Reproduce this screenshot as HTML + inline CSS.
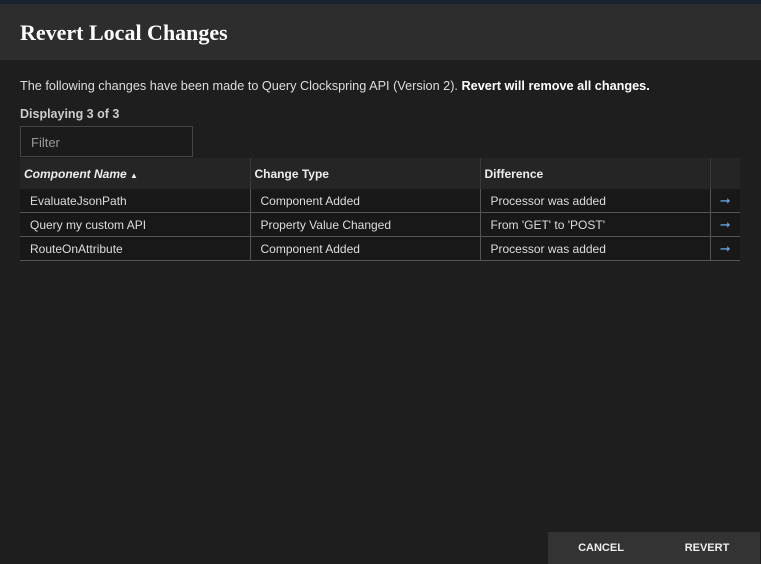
<!DOCTYPE html>
<html><head><style>
body{margin:0;width:761px;height:564px;background:#1e1e1e;font-family:"Liberation Sans",sans-serif;color:#eee;position:relative;overflow:hidden}
.top{position:absolute;left:0;top:0;width:761px;height:4px;background:#1a2330}
.hd{position:absolute;left:0;top:4px;width:761px;height:56px;background:#2d2d2d}
.hd h1{margin:0;position:absolute;left:20px;top:16px;font-family:"Liberation Serif",serif;font-size:22px;font-weight:bold;color:#fff}
.p{position:absolute;left:20px;top:79px;font-size:12.7px;color:#ddd}
.d{position:absolute;left:20px;top:107px;font-size:12.5px;color:#ccc;font-weight:bold}
.f{position:absolute;left:20px;top:126px;width:173px;height:31px;border:1px solid #444;background:#1b1b1b;box-sizing:border-box;font-size:13px;color:#999;padding:8px 10px}
table{position:absolute;left:20px;top:158px;border-collapse:collapse;font-size:12px;table-layout:fixed;width:720px}
th{background:#252525;height:31px;text-align:left;padding:0 4px;font-weight:bold;border-left:1px solid #3a3a3a;color:#eee}
th:first-child{border-left:none}
td{background:#181818;height:23px;padding:0 0 0 10px;border-left:1px solid #555;border-bottom:1px solid #555;color:#ddd}
td:first-child{border-left:none}
td.a{color:#5fa0d8;text-align:center;padding:0;font-size:13px}
.b{position:absolute;top:532px;height:32px;width:106px;background:#333;font-size:11px;font-weight:bold;text-align:center;line-height:32px;color:#eee}
</style></head><body>
<div class="top"></div>
<div class="hd"><h1>Revert Local Changes</h1></div>
<div class="p">The following changes have been made to Query Clockspring API (Version 2). <b style="color:#fff">Revert will remove all changes.</b></div>
<div class="d">Displaying 3 of 3</div>
<div class="f">Filter</div>
<table>
<colgroup><col style="width:230px"><col style="width:230px"><col style="width:230px"><col style="width:30px"></colgroup>
<tr><th><i>Component Name</i> <span style="font-size:8px">▲</span></th><th>Change Type</th><th>Difference</th><th></th></tr>
<tr><td>EvaluateJsonPath</td><td>Component Added</td><td>Processor was added</td><td class="a">➞</td></tr>
<tr><td>Query my custom API</td><td>Property Value Changed</td><td>From 'GET' to 'POST'</td><td class="a">➞</td></tr>
<tr><td>RouteOnAttribute</td><td>Component Added</td><td>Processor was added</td><td class="a">➞</td></tr>
</table>
<div class="b" style="left:548px">CANCEL</div>
<div class="b" style="left:654px;width:106px">REVERT</div>
</body></html>
